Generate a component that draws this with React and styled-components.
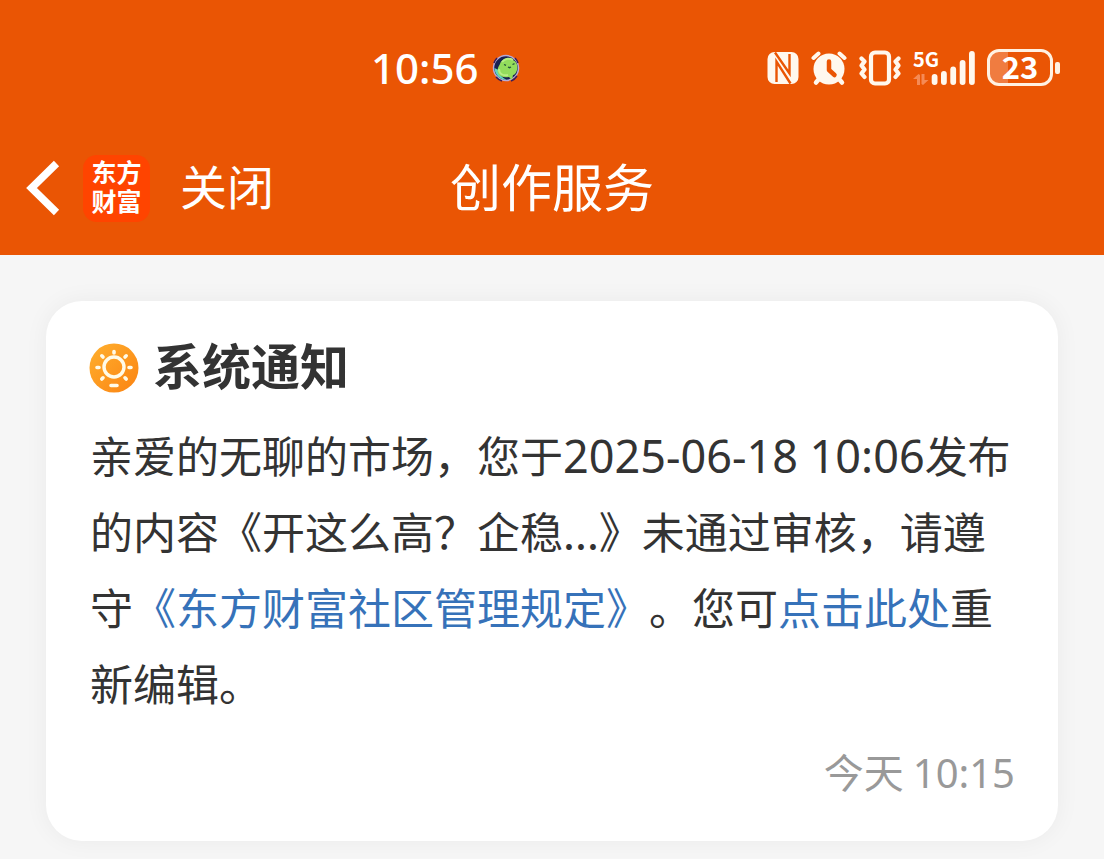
import React from "react";
import styled, { createGlobalStyle } from "styled-components";

const GlobalStyle = createGlobalStyle`
  * { box-sizing: border-box; }
  body {
    margin: 0;
    background: #f6f6f6;
    color: #333;
    font-family: "Noto Sans CJK SC", "Noto Sans", sans-serif;
    text-spacing-trim: space-all;
  }
  svg { display: block; flex: none; }
`;

const Header = styled.header`
  background: #ea5504;
  color: #fff;
`;

const StatusBar = styled.div`
  display: flex;
  align-items: center;
  justify-content: space-between;
  height: 135px;
  padding: 0 44px 0 33.6%;
`;

const StatusGroup = styled.div`
  display: flex;
  align-items: center;
  gap: ${(p) => p.$gap}px;
`;

const Clock = styled.time`
  font-family: "Noto Sans", sans-serif;
  font-size: 42px;
  font-weight: 500;
  line-height: 60px;
`;

const Signal = styled.div`
  display: grid;
  grid-template-columns: 18px 44px;
  height: 34px;
`;

const Network = styled.div`
  display: flex;
  flex-direction: column;
  justify-content: space-between;
  font-family: "Noto Sans CJK SC", sans-serif;
  font-size: 20px;
  font-weight: 700;
  line-height: 16px;
  white-space: nowrap;
`;

const Battery = styled.div`
  display: flex;
  align-items: center;
  gap: 2px;
`;

const BatteryCase = styled.div`
  width: 66px;
  height: 37px;
  border: 3px solid #fff1e2;
  border-radius: 12px;
  background: linear-gradient(to right, #f07c40 30%, transparent 30%);
  font-family: "Noto Sans CJK SC", sans-serif;
  font-size: 31px;
  font-weight: 700;
  line-height: 28px;
  text-align: center;
`;

const BatteryTip = styled.div`
  width: 5px;
  height: 12px;
  border-radius: 2px;
  background: #fff1e2;
`;

const NavBar = styled.nav`
  display: grid;
  grid-template-columns: 1fr auto 1fr;
  align-items: center;
  height: 120px;
  padding: 0 24px 14px;
`;

const NavActions = styled.div`
  display: flex;
  align-items: center;
`;

const PlainButton = styled.button`
  padding: 0;
  border: 0;
  background: none;
  color: inherit;
  font: inherit;
  font-size: 47px;
  line-height: 64px;
  cursor: pointer;
`;

const CloseButton = styled(PlainButton)`
  padding-bottom: 6px;
`;

const Logo = styled.a`
  display: flex;
  flex-direction: column;
  justify-content: center;
  align-items: center;
  width: 67px;
  height: 67px;
  margin: 0 30px 0 21px;
  padding-bottom: 4px;
  border-radius: 14px;
  background: #ff4400;
  color: #fff;
  font-size: 25px;
  font-weight: 700;
  line-height: 29px;
  text-decoration: none;
`;

const PageTitle = styled.h1`
  margin: 0;
  padding-bottom: 6px;
  font-size: 51px;
  font-weight: 400;
  line-height: 64px;
`;

const Main = styled.main`
  padding: 46px;
`;

const Card = styled.article`
  padding: 30px 43px 40px 44px;
  border-radius: 36px;
  background: #fff;
  box-shadow: 0 0 24px rgba(0, 0, 0, 0.05);
`;

const CardHeading = styled.div`
  display: flex;
  align-items: center;
  gap: 14px;
  margin: 0 0 11px -1px;
`;

const CardTitle = styled.h2`
  margin: 0;
  padding-bottom: 8px;
  font-size: 49px;
  font-weight: 700;
  line-height: 66px;
`;

const Message = styled.p`
  margin: 0;
  font-size: 43px;
  line-height: 76px;
`;

const Numerals = styled.span`
  font-family: "Noto Sans", sans-serif;
  font-size: ${(p) => p.$size}px;
  line-height: 1;
`;

const TextLink = styled.a`
  color: #3672b9;
  text-decoration: none;
`;

const Stamp = styled.time`
  display: block;
  margin-top: 21px;
  color: #999;
  font-size: 40px;
  line-height: 60px;
  text-align: right;
`;

const PetIcon = () => (
  <svg width="28" height="30" viewBox="0 0 28 30" aria-hidden="true">
    <circle cx="14" cy="15" r="12.5" fill="#182150" stroke="#b9a9d6" strokeWidth="1.5" />
    <path d="M2 10a13 13 0 0 1 3-5M23 5a13 13 0 0 1 3 5M4 24a13 13 0 0 0 6 4M19 28a13 13 0 0 0 6-5" stroke="#3a1d58" strokeWidth="1.5" fill="none" />
    <path d="M2.500 15c0 7 6 12 12 12-5-3-8-6-8-10z" fill="#62d6bd" />
    <path d="M8 11c2-6 9-7 13-4 4 2 5 6 4 10-1 4-3 5-4 5l-1 5-3-3c-5 1-9 0-11-4-1-3 0-6 2-9z" fill="#93dc5c" />
    <path d="M7 16c0 5 4 7 9 6M10 9c3-4 8-4 11-2" fill="none" stroke="#b9ee83" strokeWidth="2" />
    <path d="M12 11.500l2 .8M20.500 11.500l2-.8M16 14l1.500.7 1.500-.7" fill="none" stroke="#24543a" strokeWidth="1.300" />
  </svg>
);

const NfcIcon = () => (
  <svg width="32" height="34" viewBox="0 0 32 34" role="img" aria-label="NFC">
    <rect x="0.5" y="1" width="31" height="32" rx="7" fill="#fff8ee" />
    <path d="M9.500 31V10.500L23.500 32.500" fill="none" stroke="#ea5504" strokeWidth="2.400" />
    <path d="M22.500 3V22.500L8 1.500" fill="none" stroke="#ea5504" strokeWidth="2.400" />
  </svg>
);

const AlarmIcon = () => (
  <svg width="36" height="36" viewBox="0 0 36 36" role="img" aria-label="闹钟">
    <g stroke="#fff8ee" strokeLinecap="round" fill="none">
      <path d="M2.500 8l5-4.500M33.500 8l-5-4.500" strokeWidth="4" />
      <path d="M8 29l-3 3.500M28 29l3 3.500" strokeWidth="4.500" />
    </g>
    <circle cx="18" cy="19" r="15.500" fill="#fff8ee" />
    <path d="M18 11.500v8.500l5.500 5" fill="none" stroke="#ea5504" strokeWidth="4.500" strokeLinecap="round" strokeLinejoin="round" />
  </svg>
);

const VibrateIcon = () => (
  <svg width="42" height="36" viewBox="0 0 42 36" role="img" aria-label="振动">
    <g fill="none" stroke="#fff8ee" strokeLinejoin="round" strokeLinecap="round">
      <rect x="12" y="2.500" width="18" height="31" rx="4" strokeWidth="4.200" />
      <path d="M2.500 8.500l3 3-3 4 3 4-3 4 3 3.500M39.500 8.500l-3 3 3 4-3 4 3 4-3 3.500" strokeWidth="4.200" />
    </g>
  </svg>
);

const DataIcon = () => (
  <svg width="16" height="11" viewBox="0 0 16 11" aria-hidden="true">
    <path d="M4 11V5H0L5.500 0 7 1v10zM8.500 0h3v6h4L10 11 8.500 10z" fill="#f58a55" />
  </svg>
);

const BarsIcon = () => (
  <svg width="44" height="34" viewBox="0 0 44 34" role="img" aria-label="信号">
    <g fill="#fff8ee">
      <rect x="0.700" y="23" width="5.800" height="11" rx="2.900" />
      <rect x="10" y="20" width="5.800" height="14" rx="2.900" />
      <rect x="19.300" y="15.500" width="5.800" height="18.500" rx="2.900" />
      <rect x="28.700" y="9" width="5.800" height="25" rx="2.900" />
      <rect x="38" y="0" width="5.800" height="34" rx="2.900" />
    </g>
  </svg>
);

const BackIcon = () => (
  <svg width="38" height="60" viewBox="0 0 38 60" aria-hidden="true">
    <path d="M32.500 5.500L7.500 30l25 24.500" fill="none" stroke="#fff" strokeWidth="7.500" />
  </svg>
);

const SunIcon = () => (
  <svg width="50" height="50" viewBox="0 0 50 50" aria-hidden="true">
    <defs>
      <linearGradient id="sun" x1="0" y1="0" x2="1" y2="1">
        <stop offset="0" stopColor="#ffb02e" />
        <stop offset="1" stopColor="#fb8312" />
      </linearGradient>
    </defs>
    <circle cx="25" cy="25" r="24.500" fill="url(#sun)" />
    <circle cx="25" cy="24" r="10" fill="none" stroke="#fffbe8" strokeWidth="3.400" />
    <path
      d="M25 8.500v1.500M8 24.500h2M40 24.500h2M12.800 12.800l1.200 1.200M37.200 12.800l-1.200 1.200M12.800 36l1.200-1.200M37.200 36l-1.200-1.200M22 42.500h6"
      fill="none"
      stroke="#fffbe8"
      strokeWidth="3.600"
      strokeLinecap="round"
    />
  </svg>
);

export default function App() {
  return (
    <>
      <GlobalStyle />
      <Header>
        <StatusBar>
          <StatusGroup $gap={14}>
            <Clock>10:56</Clock>
            <PetIcon />
          </StatusGroup>
          <StatusGroup $gap={12}>
            <NfcIcon />
            <AlarmIcon />
            <VibrateIcon />
            <Signal>
              <Network>
                5G
                <DataIcon />
              </Network>
              <BarsIcon />
            </Signal>
            <Battery>
              <BatteryCase>23</BatteryCase>
              <BatteryTip />
            </Battery>
          </StatusGroup>
        </StatusBar>
        <NavBar>
          <NavActions>
            <PlainButton type="button" aria-label="返回">
              <BackIcon />
            </PlainButton>
            <Logo href="#home">
              <span>东方</span>
              <span>财富</span>
            </Logo>
            <CloseButton type="button">关闭</CloseButton>
          </NavActions>
          <PageTitle>创作服务</PageTitle>
        </NavBar>
      </Header>
      <Main>
        <Card>
          <CardHeading>
            <SunIcon />
            <CardTitle>系统通知</CardTitle>
          </CardHeading>
          <Message>
            亲爱的无聊的市场，您于<Numerals $size={45}>2025-06-18 10:06</Numerals>发布的内容《开这么高？企稳...》未通过审核，请遵守
            <TextLink href="#rules">《东方财富社区管理规定》</TextLink>。您可
            <TextLink href="#edit">点击此处</TextLink>重新编辑。
          </Message>
          <Stamp>
            今天 <Numerals $size={40}>10:15</Numerals>
          </Stamp>
        </Card>
      </Main>
    </>
  );
}
